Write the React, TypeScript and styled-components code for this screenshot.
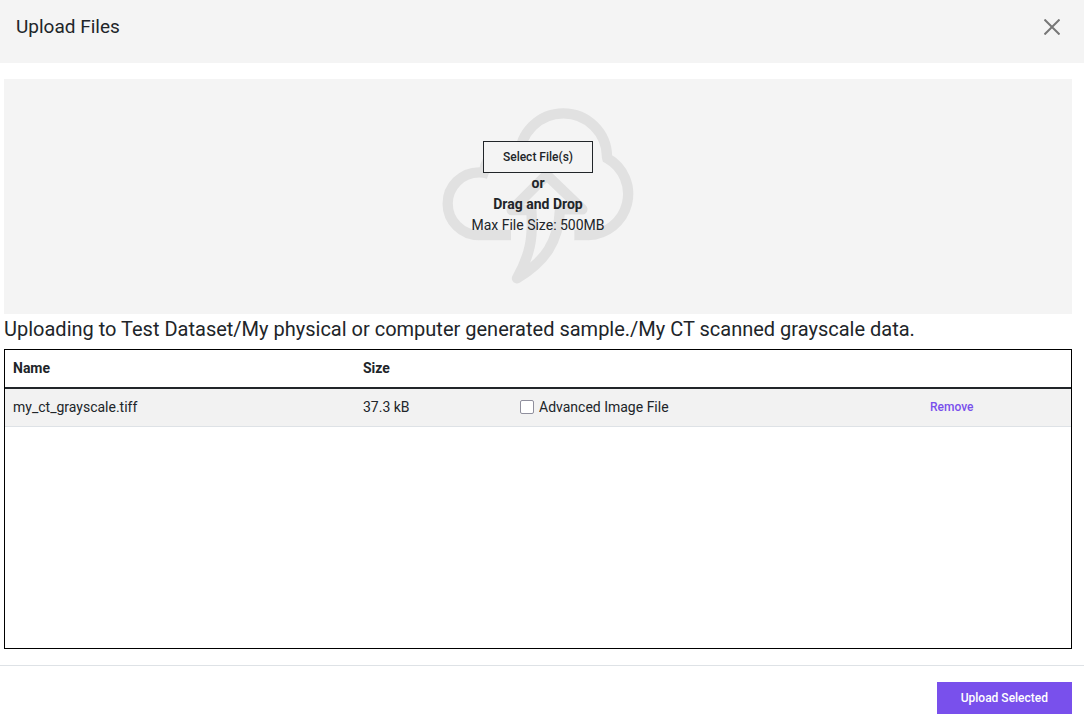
import React from "react";
import styled, { createGlobalStyle } from "styled-components";

const GlobalStyle = createGlobalStyle`
  *, *::before, *::after { box-sizing: border-box; }
  body {
    margin: 0;
    background: #fff;
    color: #212529;
    font: 400 14px/21px Roboto, sans-serif;
  }
`;

const Dialog = styled.div`
  display: flex;
  flex-direction: column;
  min-height: 100vh;
`;

const Header = styled.header`
  display: flex;
  justify-content: space-between;
  align-items: flex-start;
  padding: 15px 16px 24px;
  background: #f4f4f4;
`;

const Title = styled.h1`
  margin: 0;
  font-size: 19px;
  line-height: 24px;
  font-weight: 400;
`;

const CloseButton = styled.button`
  display: flex;
  padding: 4px 8px;
  border: 0;
  background: transparent;
  color: #777;
  cursor: pointer;
`;

const Body = styled.main`
  display: flex;
  flex-direction: column;
  flex: 1;
  padding: 16px 12px 16px 4px;
`;

const DropZone = styled.section`
  display: grid;
  place-items: center;
  padding: 29px 0 30px;
  background: #f4f4f4;
  & > * { grid-area: 1 / 1; }
`;

const DropContent = styled.div`
  display: flex;
  flex-direction: column;
  align-items: center;
  padding-bottom: 16px;
  z-index: 1;
`;

const Button = styled.button`
  height: 32px;
  padding: 0 19px;
  border: 1px solid #212529;
  background: #f4f4f4;
  color: #212529;
  font: 500 12px/16px Roboto, sans-serif;
  cursor: pointer;
`;

const PrimaryButton = styled(Button)`
  padding: 0 24px;
  border: 0;
  background: #7950ec;
  color: #fff;
`;

const Destination = styled.h2`
  margin: 4px 0 8px;
  font-size: 20px;
  line-height: 23px;
  font-weight: 400;
`;

const FilePanel = styled.div`
  flex: 1;
  border: 1px solid #000;
`;

const FileTable = styled.table`
  width: 100%;
  table-layout: fixed;
  border-collapse: separate;
  border-spacing: 0;
`;

const HeadCell = styled.th<{ $width?: string }>`
  width: ${(p) => p.$width ?? "auto"};
  height: 39px;
  padding: 8px;
  border-bottom: 2px solid #212529;
  text-align: left;
  font-weight: 700;
`;

const Cell = styled.td`
  height: 38px;
  padding: 7px 8px;
  border-bottom: 1px solid #dee2e6;
  background: #f2f2f2;
`;

const CheckLabel = styled.label`
  display: flex;
  align-items: center;
  gap: 5px;
`;

const Checkbox = styled.input`
  appearance: none;
  width: 14px;
  height: 14px;
  margin: 0 0 1px;
  border: 1px solid #8f8f9d;
  border-radius: 2px;
  background: #fff;
  &:checked { background: #7950ec; }
`;

const RemoveButton = styled.button`
  display: block;
  padding: 0;
  border: 0;
  background: transparent;
  color: #7950ec;
  font: 500 12px/23px Roboto, sans-serif;
  cursor: pointer;
`;

const Footer = styled.footer`
  display: flex;
  justify-content: flex-end;
  padding: 16px 12px 4px;
  border-top: 1px solid #dee2e6;
`;

const CloudUpload = () => (
  <svg width="192" height="176" viewBox="36 39 576 528" fill="none" stroke="#e1e1e1" strokeWidth="31" aria-hidden="true">
    <path d="M243 420H147A94 94 0 0 1 147 232Q162 232 176 237" />
    <path d="M163 226Q168 195 190 175" />
    <path d="M269 186A131 131 0 0 1 531 186L532 190A123 123 0 0 1 475 420H433" />
    <path strokeLinejoin="round" strokeLinecap="round" d="M261 550C300 480 310 430 304 345H245L350 240L457 343H390C386 440 345 500 261 550Z" />
  </svg>
);

export default function App() {
  return (
    <>
      <GlobalStyle />
      <Dialog role="dialog" aria-labelledby="dialog-title">
        <Header>
          <Title id="dialog-title">Upload Files</Title>
          <CloseButton type="button" aria-label="Close">
            <svg width="16" height="16" viewBox="0 0 16 16" stroke="currentColor" strokeWidth="2" aria-hidden="true">
              <path d="M0.5 0.5L15.5 15.5M15.5 0.5L0.5 15.5" />
            </svg>
          </CloseButton>
        </Header>
        <Body>
          <DropZone>
            <CloudUpload />
            <DropContent>
              <Button type="button">Select File(s)</Button>
              <strong>or</strong>
              <strong>Drag and Drop</strong>
              <span>Max File Size: 500MB</span>
            </DropContent>
          </DropZone>
          <Destination>
            Uploading to Test Dataset/My physical or computer generated sample./My CT scanned grayscale data.
          </Destination>
          <FilePanel>
            <FileTable>
              <thead>
                <tr>
                  <HeadCell $width="350px">Name</HeadCell>
                  <HeadCell $width="157px">Size</HeadCell>
                  <HeadCell />
                  <HeadCell $width="149px" />
                </tr>
              </thead>
              <tbody>
                <tr>
                  <Cell>my_ct_grayscale.tiff</Cell>
                  <Cell>37.3 kB</Cell>
                  <Cell>
                    <CheckLabel>
                      <Checkbox type="checkbox" />
                      Advanced Image File
                    </CheckLabel>
                  </Cell>
                  <Cell>
                    <RemoveButton type="button">Remove</RemoveButton>
                  </Cell>
                </tr>
              </tbody>
            </FileTable>
          </FilePanel>
        </Body>
        <Footer>
          <PrimaryButton type="submit">Upload Selected</PrimaryButton>
        </Footer>
      </Dialog>
    </>
  );
}
